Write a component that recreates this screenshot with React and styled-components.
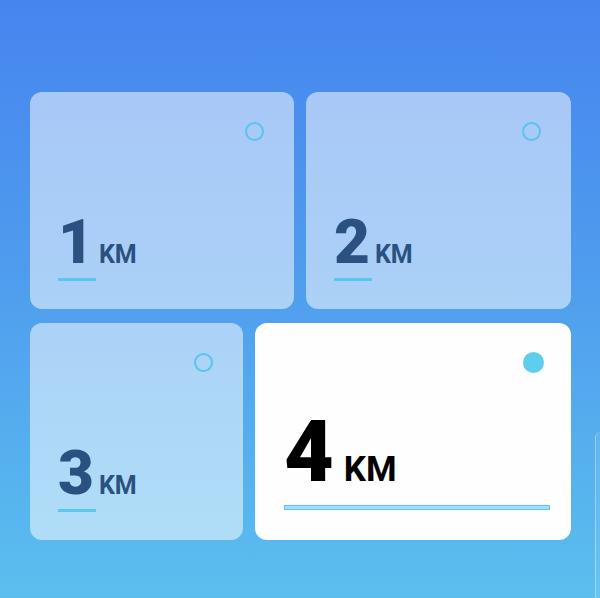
import React from 'react';
import styled, { createGlobalStyle } from 'styled-components';

const Global = createGlobalStyle`
  html, body { margin: 0; padding: 0; }
  body {
    width: 600px;
    height: 598px;
    overflow: hidden;
    font-family: Roboto, "Liberation Sans", sans-serif;
  }
`;

const Screen = styled.div`
  position: relative;
  width: 600px;
  height: 598px;
  box-sizing: border-box;
  padding: 92px 29px 0 30px;
  background: linear-gradient(180deg, #4685ef 0%, #4f9cee 45%, #5bbfee 100%);
  display: flex;
  flex-direction: column;
  gap: 14px;
  overflow: hidden;
`;

const Row = styled.div`
  display: flex;
  gap: 12px;
  height: 217px;
`;

const Card = styled.div`
  flex: 0 0 ${p => p.$width}px;
  box-sizing: border-box;
  border-radius: 12px;
  padding: ${p => (p.$active ? '29px 21px 30px 29px' : '30px 30px 28px 28px')};
  background: ${p => (p.$active ? '#fefeff' : 'rgba(255, 255, 255, 0.52)')};
  display: flex;
  flex-direction: column;
  justify-content: space-between;
`;

const Top = styled.div`
  display: flex;
  justify-content: flex-end;
  padding-right: ${p => (p.$active ? '6px' : '0')};
`;

const Dot = styled.span`
  box-sizing: border-box;
  border-radius: 50%;
  border: 2.5px solid ${p => (p.$filled ? '#5fcdee' : '#5cc3ec')};
  background: ${p => (p.$filled ? '#5fcdee' : 'transparent')};
  width: ${p => (p.$filled ? '21px' : '19px')};
  height: ${p => (p.$filled ? '21px' : '19px')};
`;

const Value = styled.div`
  display: flex;
  flex-direction: column;
`;

const Figure = styled.div`
  display: flex;
  align-items: baseline;
  gap: ${p => (p.$active ? '10px' : '5px')};
  color: ${p => (p.$active ? '#000000' : '#2a5180')};
  line-height: 1;
`;

const Num = styled.span`
  font-size: ${p => (p.$active ? '86px' : '62px')};
  font-weight: 900;
`;

const Unit = styled.span`
  font-size: ${p => (p.$active ? '35px' : '25px')};
  font-weight: 700;
`;

const Line = styled.div`
  margin-top: ${p => (p.$active ? '10px' : '5px')};
  height: ${p => (p.$active ? '5px' : '3px')};
  width: ${p => (p.$active ? '100%' : '38px')};
  box-sizing: border-box;
  background: ${p => (p.$active ? '#9ee0f5' : '#5cc6ec')};
  border: ${p => (p.$active ? '1px solid #5cc6ec' : 'none')};
`;

const Peek = styled.div`
  position: absolute;
  left: 595px;
  top: 432px;
  width: 20px;
  height: 200px;
  border-radius: 6px 0 0 0;
  border-left: 1px solid rgba(255, 255, 255, 0.35);
  background: rgba(255, 255, 255, 0.08);
`;

const DistanceCard = ({ km, width, active }) => (
  <Card $width={width} $active={active}>
    <Top $active={active}>
      <Dot $filled={active} />
    </Top>
    <Value>
      <Figure $active={active}>
        <Num $active={active}>{km}</Num>
        <Unit $active={active}>KM</Unit>
      </Figure>
      <Line $active={active} />
    </Value>
  </Card>
);

export default function App() {
  return (
    <>
      <Global />
      <Screen>
        <Row>
          <DistanceCard km="1" width={264} />
          <DistanceCard km="2" width={265} />
        </Row>
        <Row>
          <DistanceCard km="3" width={213} />
          <DistanceCard km="4" width={316} active />
        </Row>
        <Peek />
      </Screen>
    </>
  );
}
